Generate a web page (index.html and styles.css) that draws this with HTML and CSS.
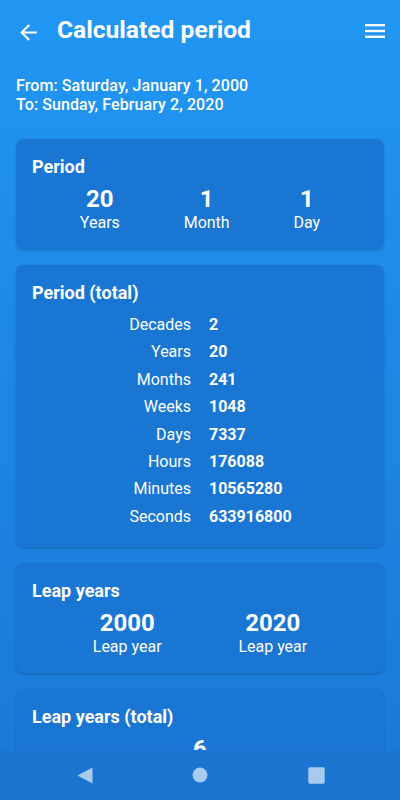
FILE: index.html
```html
<!DOCTYPE html>
<html lang="en">
<head>
<meta charset="utf-8">
<title>Calculated period</title>
<link rel="stylesheet" href="styles.css">
</head>
<body>
<div class="screen">
  <main class="scroll">
    <header class="toolbar">
      <svg class="icon-back" width="25" height="25" viewBox="0 0 24 24" aria-hidden="true"><path fill="#fff" d="M20 11H7.83l5.59-5.59L12 4l-8 8 8 8 1.41-1.41L7.83 13H20v-2z"/></svg>
      <h1 class="title">Calculated period</h1>
      <svg class="icon-menu" width="20" height="14" viewBox="0 0 20 14" aria-hidden="true"><rect x="0" y="0" width="20" height="2.4" fill="#fff"/><rect x="0" y="5.8" width="20" height="2.4" fill="#fff"/><rect x="0" y="11.6" width="20" height="2.4" fill="#fff"/></svg>
    </header>

    <div class="dates">
      <p>From: Saturday, January 1, 2000</p>
      <p>To: Sunday, February 2, 2020</p>
    </div>

    <section class="card">
      <h2 class="card-title">Period</h2>
      <div class="stats">
        <div class="stat"><span class="num">20</span><span class="lbl">Years</span></div>
        <div class="stat"><span class="num">1</span><span class="lbl">Month</span></div>
        <div class="stat"><span class="num">1</span><span class="lbl">Day</span></div>
      </div>
    </section>

    <section class="card">
      <h2 class="card-title">Period (total)</h2>
      <dl class="totals">
        <dt>Decades</dt><dd>2</dd>
        <dt>Years</dt><dd>20</dd>
        <dt>Months</dt><dd>241</dd>
        <dt>Weeks</dt><dd>1048</dd>
        <dt>Days</dt><dd>7337</dd>
        <dt>Hours</dt><dd>176088</dd>
        <dt>Minutes</dt><dd>10565280</dd>
        <dt>Seconds</dt><dd>633916800</dd>
      </dl>
    </section>

    <section class="card">
      <h2 class="card-title">Leap years</h2>
      <div class="stats">
        <div class="stat"><span class="num">2000</span><span class="lbl">Leap year</span></div>
        <div class="stat"><span class="num">2020</span><span class="lbl">Leap year</span></div>
      </div>
    </section>

    <section class="card">
      <h2 class="card-title">Leap years (total)</h2>
      <div class="stats">
        <div class="stat"><span class="num">6</span><span class="lbl">Leap years</span></div>
      </div>
    </section>
  </main>

  <nav class="sysnav">
    <svg width="16" height="17" viewBox="0 0 16 17" aria-hidden="true"><path d="M15.5 0.5V16.5L0.5 8.5Z" fill="rgba(255,255,255,0.62)"/></svg>
    <svg width="16" height="16" viewBox="0 0 16 16" aria-hidden="true"><circle cx="8" cy="8" r="7.5" fill="rgba(255,255,255,0.62)"/></svg>
    <svg width="17" height="17" viewBox="0 0 17 17" aria-hidden="true"><rect x="0.3" y="0.3" width="16.4" height="16.4" rx="1.6" fill="rgba(255,255,255,0.62)"/></svg>
  </nav>
</div>
</body>
</html>
```

FILE: styles.css
```css
* { box-sizing: border-box; }

html, body {
  margin: 0;
  padding: 0;
}

body {
  font-family: Roboto, "Noto Sans", "Liberation Sans", sans-serif;
  color: #fff;
  background: #1976D2;
}

.screen {
  width: 400px;
  height: 800px;
  display: flex;
  flex-direction: column;
  background: linear-gradient(180deg, #2196F3 0%, #1A78D5 100%);
  overflow: hidden;
}

.scroll {
  height: 750px;
  overflow: hidden;
  flex: none;
}

.toolbar {
  height: 60px;
  display: flex;
  align-items: center;
  padding: 0 15px 0 16px;
}

.icon-back {
  flex: none;
  margin-top: 5px;
}

.icon-menu {
  flex: none;
  margin-top: 2px;
}

.title {
  flex: 1;
  margin: 0 0 0 16px;
  font-size: 24.6px;
  line-height: 28px;
  font-weight: 700;
}

.dates {
  margin: 16px 16px 25px;
  font-size: 16px;
  line-height: 19px;
  font-weight: 500;
  letter-spacing: 0.08px;
}

.dates p {
  margin: 0;
}

.card {
  margin: 0 16px 16px;
  padding: 16px 0 17px;
  background: #1976D2;
  border-radius: 8px;
  box-shadow: 0 1px 3px rgba(0, 0, 0, 0.22);
}

.card-title {
  margin: 0 0 6px;
  padding: 0 16px;
  font-size: 18px;
  line-height: 24px;
  font-weight: 700;
}

.stats {
  display: flex;
  justify-content: space-evenly;
}

.stat {
  display: flex;
  flex-direction: column;
  align-items: center;
}

.num {
  font-size: 24px;
  line-height: 28px;
  font-weight: 700;
}

.lbl {
  font-size: 16px;
  line-height: 19px;
}

.totals {
  margin: 0;
  display: grid;
  grid-template-columns: 1fr 1fr;
  font-size: 16px;
  line-height: 27.4px;
}

.totals dt {
  text-align: right;
  padding-right: 9px;
}

.totals dd {
  margin: 0;
  padding-left: 9px;
  font-weight: 700;
}

.sysnav {
  height: 50px;
  flex: none;
  background: #1A74D0;
  display: flex;
  align-items: center;
  justify-content: center;
  gap: 99.5px;
  padding-left: 1px;
}
```
